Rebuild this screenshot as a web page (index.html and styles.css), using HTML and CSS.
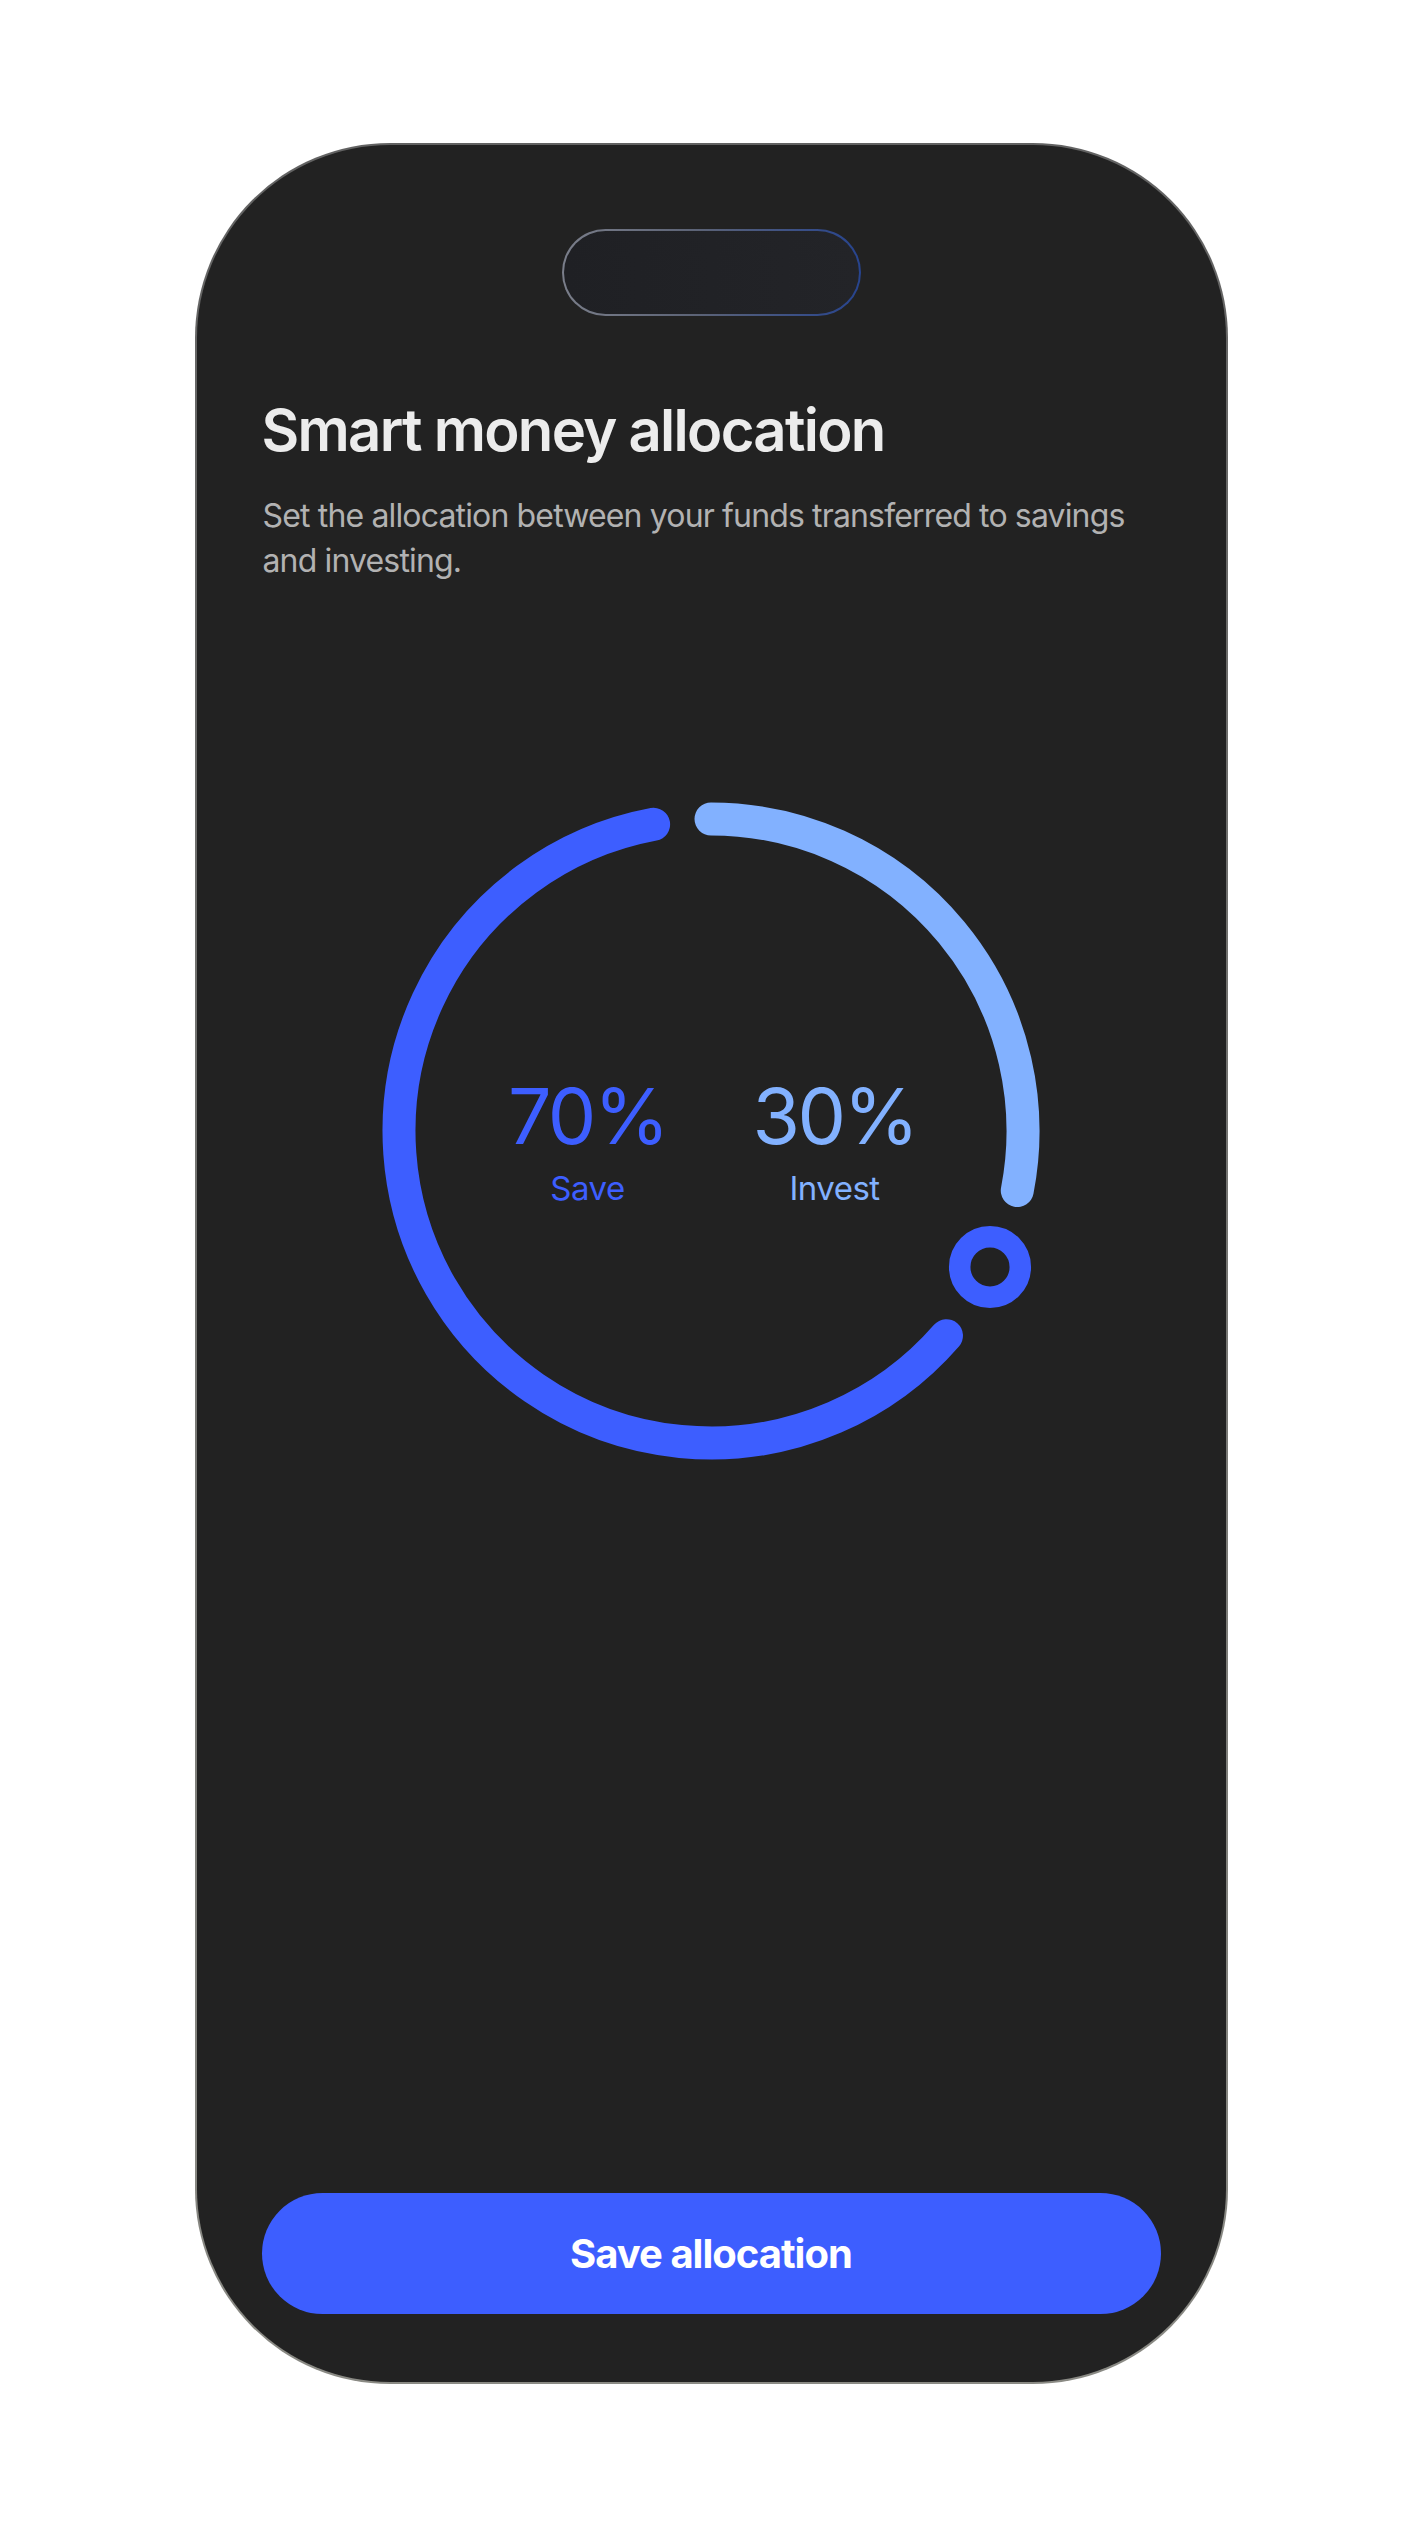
FILE: index.html
```html
<!DOCTYPE html>
<html lang="en">
<head>
    <meta charset="UTF-8">
    <meta name="viewport" content="width=device-width, initial-scale=1.0">
    <title>Smart money allocation</title>
    <link rel="stylesheet" href="styles.css">
</head>
<body>

<div class="page">
    <div class="phone">
        <div class="island"></div>

        <h1 class="title">Smart money allocation</h1>
        <p class="subtitle">Set the allocation between your funds transferred to savings and investing.</p>

        <div class="dial">
            <svg class="ring" width="700" height="700" viewBox="0 0 700 700">
                <path d="M350 38 A312 312 0 0 1 656.27 409.53" class="arc arc-invest"/>
                <path d="M585.47 554.69 A312 312 0 1 1 292.61 43.32" class="arc arc-save"/>
                <circle cx="629" cy="486" r="30.3" class="handle"/>
            </svg>
            <div class="stats">
                <div class="stat save">
                    <div class="percent">70%</div>
                    <div class="label">Save</div>
                </div>
                <div class="stat invest">
                    <div class="percent">30%</div>
                    <div class="label">Invest</div>
                </div>
            </div>
        </div>

        <button class="save-btn">Save allocation</button>
    </div>
</div>

</body>
</html>
```

FILE: styles.css
```css
body {
    margin: 0;
    padding: 0;
    background: #ffffff;
    font-family: 'Inter', 'Noto Sans', sans-serif;
}
.page {
    display: flex;
    justify-content: center;
    padding-top: 143px;
    height: 2533px;
    box-sizing: border-box;
}
.phone {
    width: 1033px;
    height: 2241px;
    box-sizing: border-box;
    border: 2px solid transparent;
    border-radius: 195px;
    background:
        linear-gradient(#222222, #222222) padding-box,
        linear-gradient(#626262, #8a8a84) border-box;
    padding: 0 65px 68px;
    display: flex;
    flex-direction: column;
}
.island {
    align-self: center;
    width: 299px;
    height: 87px;
    margin-top: 84px;
    box-sizing: border-box;
    border: 2px solid transparent;
    border-radius: 44px;
    background:
        linear-gradient(90deg, #1f2024, #232428) padding-box,
        linear-gradient(90deg, #7a7e8a 0%, #5c6376 45%, #27448f 100%) border-box;
}
.title {
    margin: 80px 0 0;
    font-size: 58px;
    line-height: 1.2;
    font-weight: 600;
    letter-spacing: -1.7px;
    color: #ececec;
}
.subtitle {
    margin: 27px 0 0;
    padding-left: 1px;
    font-size: 32px;
    line-height: 45px;
    letter-spacing: -0.85px;
    color: #b2b2b2;
}
.dial {
    display: grid;
    justify-content: center;
    margin-top: 198px;
}
.ring, .stats {
    grid-area: 1 / 1;
}
.arc {
    fill: none;
    stroke-width: 33;
    stroke-linecap: round;
}
.arc-save {
    stroke: #3d5eff;
}
.arc-invest {
    stroke: #82b1ff;
}
.handle {
    fill: none;
    stroke: #3d5eff;
    stroke-width: 21.5;
}
.stats {
    align-self: start;
    display: flex;
    justify-content: center;
    gap: 47px;
    margin-top: 297px;
}
.stat {
    width: 200px;
    text-align: center;
}
.percent {
    font-size: 77px;
    line-height: 1;
    font-weight: 400;
    letter-spacing: -2.5px;
}
.label {
    margin-top: 14px;
    font-size: 33px;
    line-height: 1.2;
    letter-spacing: -0.5px;
}
.save {
    color: #3d5eff;
}
.invest {
    color: #82b1ff;
}
.save-btn {
    margin-top: auto;
    height: 121px;
    border: none;
    border-radius: 61px;
    background: #3d5eff;
    color: #ffffff;
    font-family: inherit;
    font-size: 40px;
    font-weight: 700;
    letter-spacing: -1px;
    cursor: pointer;
}
```
